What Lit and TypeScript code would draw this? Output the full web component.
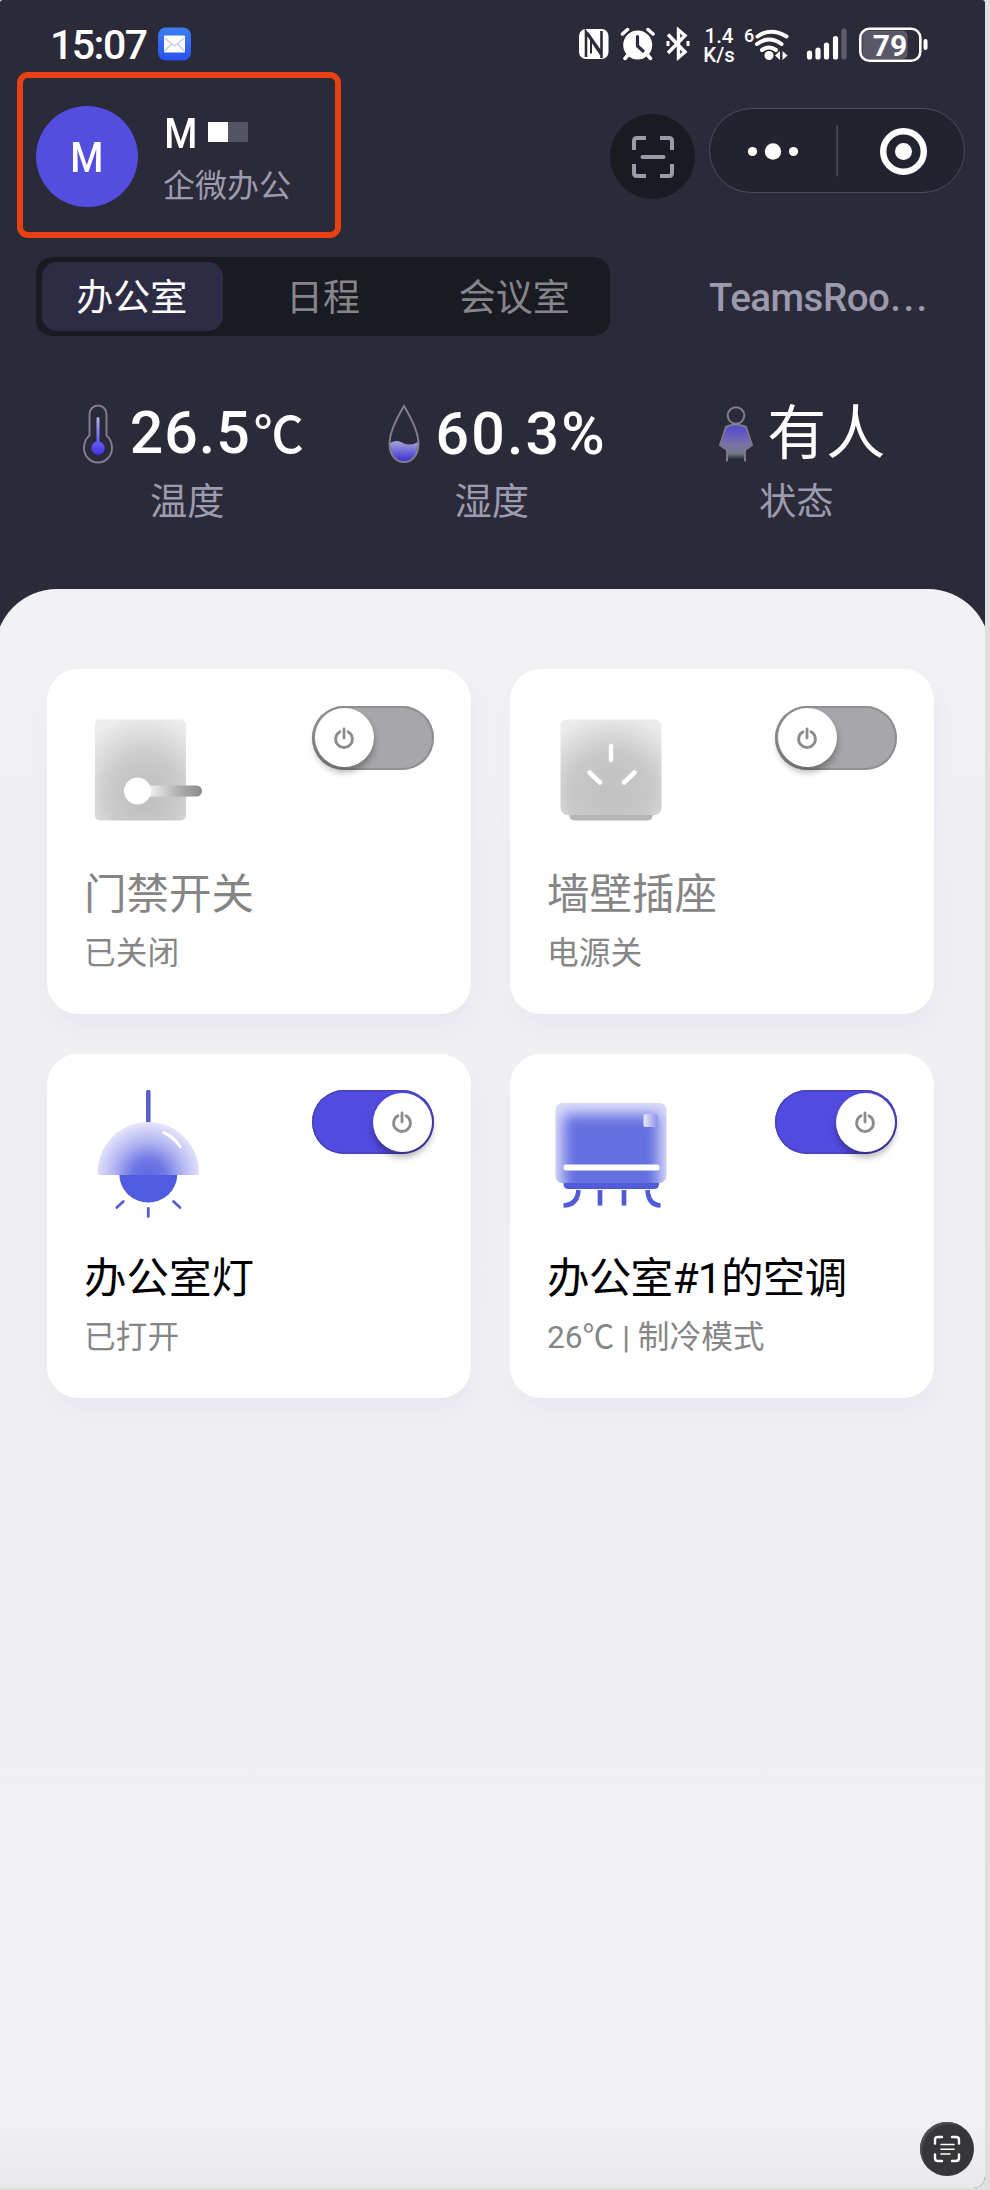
import { LitElement, html, css, svg, TemplateResult } from "lit";
import { customElement, property } from "lit/decorators.js";
import { classMap } from "lit/directives/class-map.js";

const doorIcon = svg`
  <defs>
    <radialGradient id="door" cx="0.55" cy="0.75" r="0.8">
      <stop offset="0" stop-color="#bdbdbd"/><stop offset="0.5" stop-color="#cbcbcb"/><stop offset="1" stop-color="#ececec"/>
    </radialGradient>
    <linearGradient id="handle" gradientUnits="userSpaceOnUse" x1="150" y1="0" x2="202" y2="0">
      <stop offset="0" stop-color="#f0f0f0"/><stop offset="0.5" stop-color="#b4b4b4"/><stop offset="1" stop-color="#8a8a8a"/>
    </linearGradient>
  </defs>
  <rect x="95" y="719" width="91" height="101" rx="5" fill="url(#door)"/>
  <path d="M150 785H196.500a5.500 5.500 0 0 1 0 11H150z" fill="url(#handle)"/>
  <circle cx="137.500" cy="790.500" r="13.500" fill="#fff"/>`;

const socketIcon = svg`
  <defs>
    <radialGradient id="sock" cx="0.5" cy="0.75" r="0.8">
      <stop offset="0" stop-color="#c1c1c1"/><stop offset="0.5" stop-color="#c8c8c8"/><stop offset="1" stop-color="#ebebeb"/>
    </radialGradient>
  </defs>
  <path d="M105.500 812h85q-1 8-6 8h-73q-5 0-6-8z" fill="#b5b5b5"/>
  <rect x="97.500" y="719" width="101" height="95.500" rx="7" fill="url(#sock)"/>
  <path d="M148 745.500v14M126.500 772l10.500 10M171.500 772l-10.500 10" stroke="#fff" stroke-width="4.500" stroke-linecap="round"/>`;

const lampIcon = svg`
  <defs>
    <radialGradient id="dome" gradientUnits="userSpaceOnUse" cx="148.300" cy="1176" r="54">
      <stop offset="0" stop-color="#5e68e2"/><stop offset="0.3" stop-color="#6f78e5"/><stop offset="0.65" stop-color="#b3b6f2"/><stop offset="1" stop-color="#e6e6fb"/>
    </radialGradient>
  </defs>
  <path d="M148.300 1092v32" stroke="#5560d0" stroke-width="4.500" stroke-linecap="round"/>
  <path d="M119.300 1174a29 28.500 0 0 0 58 0z" fill="#4f5cdf"/>
  <path d="M99 1175q-1.500-1-1.300-3a50.600 50 0 0 1 101.200 0q0.200 2-1.300 3z" fill="url(#dome)"/>
  <path d="M163.500 1132.500q11 4 17 14.500q-7-9-17-14.500z" stroke="#fff" stroke-width="2.500" stroke-linejoin="round" fill="#fff"/>
  <path d="M148.300 1208.500v8M123.300 1201.500l-6.500 6M173.500 1201.500l6.500 6" stroke="#5560d0" stroke-width="2.800" stroke-linecap="round"/>`;

const acIcon = svg`
  <defs>
    <filter id="soft" x="-0.2" y="-0.2" width="1.4" height="1.4"><feGaussianBlur stdDeviation="7"/></filter>
    <clipPath id="body"><rect x="92.500" y="1103" width="111" height="80" rx="7"/></clipPath>
    <linearGradient id="led"><stop offset="0" stop-color="#e9e9fc"/><stop offset="1" stop-color="#8c91ea"/></linearGradient>
  </defs>
  <path d="M100.500 1181h95.500v3q0 5-5 5h-85.500q-5 0-5-5z" fill="#4f5bd8"/>
  <g clip-path="url(#body)">
    <rect x="92" y="1102" width="112" height="82" fill="#dcdcfa"/>
    <rect x="100" y="1114" width="96" height="84" fill="#6570e0" filter="url(#soft)"/>
  </g>
  <rect x="100.500" y="1164.500" width="96" height="6" rx="2.500" fill="#fff"/>
  <rect x="180.500" y="1114" width="14" height="13" rx="2" fill="url(#led)"/>
  <path d="M115.500 1190q-1 15-15 15.500M137 1190v15.500M161 1190v15.500M184.500 1190q1 15 13 15.500" stroke="#4f5bd8" stroke-width="4.600" fill="none"/>`;

@customElement("power-switch")
export class PowerSwitch extends LitElement {
  @property({ type: Boolean }) on = false;
  static styles = css`
    :host { display: block; }
    .track {
      box-sizing: border-box; width: 122px; height: 64px; padding: 2.5px; border-radius: 32px;
      display: flex; background: #a7a7ab; border: 0; box-shadow: inset 0 0 0 2px #8f8f92;
    }
    .on { background: #524be2; justify-content: flex-end; box-shadow: inset 0 0 0 1.5px #4741b8; }
    .knob {
      width: 59px; height: 59px; border-radius: 50%; background: #fff;
      display: flex; align-items: center; justify-content: center;
      box-shadow: 0 5px 7px rgba(0, 0, 0, 0.32);
    }
  `;
  render() {
    return html`<div class=${classMap({ track: true, on: this.on })}>
      <div class="knob">
        <svg width="22" height="24" viewBox="0 0 22 24" fill="none" stroke="#8c8c8c" stroke-width="2.800" stroke-linecap="round">
          <path d="M7 5.700a8.400 8.400 0 1 0 8 0M11 3v9" />
        </svg>
      </div>
    </div>`;
  }
}

@customElement("device-card")
export class DeviceCard extends LitElement {
  @property({ attribute: false }) icon: TemplateResult | unknown;
  @property() name = "";
  @property() status = "";
  @property({ type: Number }) top = 0;
  @property({ type: Boolean }) on = false;
  static styles = css`
    :host {
      display: block; box-sizing: border-box; height: 344.5px; border-radius: 31px; background: #fff;
      padding: 36.5px 37px 0 37px; box-shadow: 3px 14px 20px rgba(90, 80, 230, 0.05);
      font-family: Roboto, "Noto Sans CJK SC", sans-serif;
    }
    .head { display: flex; justify-content: space-between; height: 159px; }
    .art { display: block; flex: none; }
    .name { font-size: 42.5px; line-height: 60px; white-space: nowrap; color: #858585; }
    .name.on { color: #000; }
    .name.long { letter-spacing: -0.7px; }
    .status { font-size: 31.7px; line-height: 44px; margin-top: 7px; white-space: nowrap; color: #868686; }
  `;
  render() {
    return html`
      <div class="head">
        <svg class="art" width="140" height="140" viewBox="84 ${this.top + 36.5} 140 140">${this.icon}</svg>
        <power-switch ?on=${this.on}></power-switch>
      </div>
      <div class=${classMap({ name: true, on: this.on, long: this.name.length > 6 })}>${this.name}</div>
      <div class="status">${this.status}</div>
    `;
  }
}

@customElement("app-root")
export class AppRoot extends LitElement {
  static styles = css`
    :host {
      display: block; width: 990px; height: 2190px; box-sizing: border-box; background: #dfdfe0;
      font-family: Roboto, "Noto Sans CJK SC", sans-serif;
    }
    .screen {
      width: 985px; height: 2188px; overflow: hidden; position: relative;
      background: #2b2a39; border-radius: 3px 3px 12px 0; display: flex; flex-direction: column;
    }
    svg { display: block; flex: none; }
    .header { height: 589px; flex: none; }
    .statusbar { height: 72px; box-sizing: border-box; padding: 27px 0 0 50px; display: flex; align-items: flex-start; color: #fff; }
    .time { width: 108px; font-size: 41px; line-height: 37px; font-weight: 500; letter-spacing: -1.5px; }
    .icons { display: flex; margin-left: auto; padding-right: 56.5px; }
    .alarm { margin-left: 11px; }
    .bt { margin-left: 11px; }
    .rate { width: 36px; margin-left: 11px; text-align: center; font-size: 20.5px; font-weight: 500; }
    .rate span { display: block; height: 18px; line-height: 18px; }
    .rate span + span { margin-top: 1px; }
    .wifi { margin-left: 6.5px; overflow: visible; }
    .signal { margin-left: 16px; }
    .battery { margin-left: 12px; }

    .top { display: flex; height: 166px; padding-left: 17px; }
    .profile {
      box-sizing: border-box; width: 324px; height: 166px; border: 6px solid #e64013; border-radius: 11px;
      display: flex; align-items: flex-start; padding: 28px 0 0 13px;
    }
    .avatar {
      width: 102px; height: 101px; border-radius: 50%; background: #534de0; color: #fff; flex: none;
      display: flex; align-items: center; justify-content: center; font-size: 43px; font-weight: 500;
    }
    .m { display: inline-block; transform: scaleX(0.88); transform-origin: center; }
    .who { margin-left: 24px; display: flex; flex-direction: column; }
    .nameline { display: flex; height: 55px; color: #fff; font-size: 43px; line-height: 55px; font-weight: 500; }
    .mask { margin: 16px 0 0 8px; width: 20px; height: 20px; background: #fff; }
    .mask2 { margin-top: 16px; width: 20px; height: 20px; background: #555463; }
    .org { font-size: 32px; line-height: 46px; margin: 2px 0 0 1px; color: #9c9baf; }
    .scan {
      width: 85px; height: 85px; margin: 42px 0 0 269px; border-radius: 50%; background: #1a1a22;
      display: flex; align-items: center; justify-content: center;
    }
    .capsule {
      box-sizing: border-box; width: 256px; height: 85px; margin: 36px 0 0 14px; border: 1.5px solid #4e4d5d;
      border-radius: 43px; background: #23222f; display: flex; align-items: center;
    }

    .nav { display: flex; margin: 19px 0 0 36px; height: 79px; }
    .tabs { width: 574px; display: grid; grid-template-columns: repeat(3, 1fr); background: #1a1a22; border-radius: 16px; }
    .tab {
      margin: 5px 4px 5px 6px; padding: 0 2px 3px 0; display: flex; align-items: center; justify-content: center;
      font-size: 37px; color: #86858a; border-radius: 15px;
    }
    .tab.active { background: #2e2b44; color: #fff; }
    .room { margin-left: 99px; font-size: 38.5px; line-height: 82px; font-weight: 500; letter-spacing: -0.5px; color: #9c9aae; white-space: nowrap; }
    .dots { letter-spacing: 2.4px; margin-left: 1px; }

    .sensors { display: grid; grid-template-columns: repeat(3, 304.5px); margin: 66px 0 0 35px; }
    .sensor { display: flex; flex-direction: column; align-items: center; }
    .reading { display: flex; align-items: center; height: 64px; margin-left: 11px; }
    .value { margin-left: 16px; font-size: 59px; line-height: 64px; font-weight: 500; color: #fff; white-space: nowrap; letter-spacing: 1px; }
    .percent { letter-spacing: 2.2px; }
    .cjk { font-weight: 400; margin-left: 13px; letter-spacing: 0; }
    .unit { font-size: 50px; margin-left: 3px; letter-spacing: 0; }
    .label { margin-top: 9px; font-size: 37.3px; line-height: 54px; color: #9c9baf; }

    .panel {
      flex: 1; margin: 0 -5px; padding: 80px 56px 0 52px; border-radius: 62px 62px 0 0;
      background: linear-gradient(#f2f1f4, #f0f0f2 300px, #f1f1f3 calc(100% - 65px), #e9e9eb);
    }
    .cards { display: grid; grid-template-columns: 424px 424px; column-gap: 39px; row-gap: 40px; }
    .fab {
      position: absolute; right: 11px; bottom: 12px; width: 54px; height: 54px; border-radius: 50%;
      background: #363638; box-shadow: inset 2px 2px 1px #505052; display: flex; align-items: center; justify-content: center;
    }
  `;

  private statusIcons() {
    return html`
      <svg width="30" height="34" viewBox="575 27 30 34">
        <rect x="575" y="29" width="29.500" height="30" rx="7" fill="#fff" />
        <path d="M582 57V32L597.500 55V58M597.500 56V31" fill="none" stroke="#2b2a39" stroke-width="2.600" />
        <path d="M587 38.500v15" fill="none" stroke="#2b2a39" stroke-width="2" />
        <path d="M583.500 33l13 18.500" stroke="#2b2a39" stroke-width="2.200" />
      </svg>
      <svg class="alarm" width="35" height="34" viewBox="616.500 27 35 34" fill="none" stroke="#fff" stroke-linecap="round">
        <circle cx="634.200" cy="45" r="14.500" fill="#fff" stroke="none" />
        <path d="M619 34l5-4.500M649.500 34l-5-4.500M624.500 55l-3 3.500M644 55l3 3.500" stroke-width="3.500" />
        <path d="M634 36.500v9.500l5.500 5" stroke="#2b2a39" stroke-width="3.200" />
      </svg>
      <svg class="bt" width="24" height="34" viewBox="662.500 27 24 34" fill="none" stroke="#fff" stroke-width="3.400">
        <path d="M664.500 34.500l17 17.500l-6.500 5.500V30l6.500 5.500L664.500 53" />
        <path d="M664.500 41v5M684.500 41v5" stroke-width="3" />
      </svg>
      <div class="rate"><span>1.4</span><span>K/s</span></div>
      <svg class="wifi" width="46" height="34" viewBox="743.500 27 46 34" fill="none" stroke="#fff" stroke-width="4" stroke-linecap="round">
        <text x="743.500" y="41.500" font-size="18" font-weight="500" fill="#fff" stroke="none">6</text>
        <path d="M757 36.500q13-9.500 29 0M756.500 44q12-9 24.500 0M761.500 50q7-5 14 0" />
        <circle cx="768.500" cy="55.500" r="4.500" fill="#fff" stroke="none" />
        <path d="M779.500 51v9l-5-4.500zM782 51v9l5-4.500z" fill="#fff" stroke="none" />
      </svg>
      <svg class="signal" width="41" height="34" viewBox="805.500 27 41 34" stroke="#fff" stroke-width="5.200" stroke-linecap="round">
        <path d="M809 53v4M817.500 50v7M826 45v12M835 38.500v18.500" />
        <path d="M843.500 31v26" stroke="#5e5d70" />
      </svg>
      <svg class="battery" width="70" height="36" viewBox="858.500 26.500 70 36">
        <rect x="862" y="30" width="45" height="28.500" rx="5" fill="#595868" />
        <rect x="859.800" y="28.200" width="60" height="32" rx="9" fill="none" stroke="#fff" stroke-width="2.600" />
        <rect x="923" y="38.500" width="4" height="11" rx="2" fill="#fff" />
        <text x="889.500" y="55" text-anchor="middle" font-size="30" font-weight="700" fill="#fff">79</text>
      </svg>
    `;
  }

  private thermo() {
    return html`<svg width="32" height="60" viewBox="0 0 32 60">
      <defs><linearGradient id="t" x1="0" y1="0" x2="0" y2="1"><stop offset="0" stop-color="#b9b5e8" /><stop offset="0.6" stop-color="#6a62f0" /><stop offset="1" stop-color="#3d33f0" /></linearGradient></defs>
      <path d="M7.500 10a8.500 8.500 0 0 1 17 0v21.500q5.500 4.500 5.500 12.500a14 14.500 0 0 1-28 0q0-8 5.500-12.500z" fill="none" stroke="#82808e" stroke-width="1.900" />
      <path d="M14.500 14.500a1.500 1.500 0 0 1 3 0v23a6.700 6.700 0 1 1-3 0z" fill="url(#t)" />
    </svg>`;
  }
  private drop() {
    return html`<svg width="32" height="60" viewBox="0 0 32 60">
      <defs><linearGradient id="w" x1="0" y1="0" x2="0" y2="1"><stop offset="0" stop-color="#a9a5dc" /><stop offset="1" stop-color="#3029cf" /></linearGradient></defs>
      <path d="M2 39q7-4 13 0q7 3.500 15-1q1 20-14 20.500Q1 58 2 39z" fill="url(#w)" />
      <path d="M16 2Q1.500 26 1.500 40c0 11 6.500 18 14.500 18s14.500-7 14.500-18Q30.500 26 16 2z" fill="none" stroke="#82808e" stroke-width="1.900" />
    </svg>`;
  }
  private person() {
    return html`<svg width="36" height="60" viewBox="0 0 36 60">
      <defs><linearGradient id="p" x1="0" y1="0" x2="0" y2="1"><stop offset="0" stop-color="#4d43d8" /><stop offset="0.6" stop-color="#7773aa" /><stop offset="0.85" stop-color="#77758a" /><stop offset="1" stop-color="#2b2a39" /></linearGradient></defs>
      <path d="M8 22q9-5 20 0l6 19-7 5v9H9v-9l-7-5z" fill="url(#p)" />
      <path d="M9 57.500V46l-7-5 6-18q9.500-4.500 20 0l6 18-7 5v11.500" fill="none" stroke="#7a7889" stroke-width="2" />
      <circle cx="18" cy="11.500" r="8.300" fill="none" stroke="#82808e" stroke-width="2" />
    </svg>`;
  }

  render() {
    return html`
      <div class="screen">
        <div class="header">
          <div class="statusbar">
            <div class="time">15:07</div>
            <svg width="33" height="34" viewBox="0 0 33 34">
              <defs><linearGradient id="mail" x1="0" y1="0" x2="0" y2="1"><stop offset="0" stop-color="#3b80f4" /><stop offset="1" stop-color="#2a50ef" /></linearGradient></defs>
              <rect width="33" height="33" y="0.500" rx="8" fill="url(#mail)" />
              <rect x="6" y="8.500" width="21" height="17" rx="1" fill="#fff" />
              <path d="M6.500 11l10 8 10-8M6.500 24l7-7M26.500 24l-7-7" fill="none" stroke="#c3cbe6" stroke-width="1.300" />
            </svg>
            <div class="icons">${this.statusIcons()}</div>
          </div>
          <div class="top">
            <div class="profile">
              <div class="avatar"><span class="m">M</span></div>
              <div class="who">
                <div class="nameline"><span class="m">M</span><i class="mask"></i><i class="mask2"></i></div>
                <div class="org">企微办公</div>
              </div>
            </div>
            <div class="scan">
              <svg width="42" height="42" viewBox="0 0 42 42" fill="none" stroke="#9b9aa8" stroke-width="4">
                <path d="M2 14V5q0-3 3-3h9M28 2h9q3 0 3 3v9M40 28v9q0 3-3 3h-9M14 40H5q-3 0-3-3v-9" />
                <path d="M10.500 21h21" stroke-linecap="round" />
              </svg>
            </div>
            <div class="capsule">
              <svg width="253" height="82" viewBox="710 109.500 253 82" fill="#fff">
                <circle cx="752.500" cy="151" r="4.600" /><circle cx="773" cy="151" r="8.200" /><circle cx="793.500" cy="151" r="4.600" />
                <rect x="836.500" y="125" width="1.500" height="51" fill="#4e4d5d" />
                <circle cx="903.500" cy="151" r="20.300" fill="none" stroke="#fff" stroke-width="6.400" />
                <circle cx="903.500" cy="151" r="8.500" />
              </svg>
            </div>
          </div>
          <div class="nav">
            <div class="tabs">
              <div class="tab active">办公室</div>
              <div class="tab">日程</div>
              <div class="tab">会议室</div>
            </div>
            <div class="room">TeamsRoo<span class="dots">...</span></div>
          </div>
          <div class="sensors">
            <div class="sensor">
              <div class="reading">${this.thermo()}<div class="value">26.5<span class="unit">℃</span></div></div>
              <div class="label">温度</div>
            </div>
            <div class="sensor">
              <div class="reading">${this.drop()}<div class="value percent">60.3%</div></div>
              <div class="label">湿度</div>
            </div>
            <div class="sensor">
              <div class="reading">${this.person()}<div class="value cjk">有人</div></div>
              <div class="label">状态</div>
            </div>
          </div>
        </div>
        <div class="panel">
          <div class="cards">
            <device-card .icon=${doorIcon} .top=${669} name="门禁开关" status="已关闭"></device-card>
            <device-card .icon=${socketIcon} .top=${669} name="墙壁插座" status="电源关"></device-card>
            <device-card .icon=${lampIcon} .top=${1053.5} name="办公室灯" status="已打开" on></device-card>
            <device-card .icon=${acIcon} .top=${1053.5} name="办公室#1的空调" status="26℃ | 制冷模式" on></device-card>
          </div>
        </div>
        <div class="fab">
          <svg width="28" height="28" viewBox="0 0 28 28" fill="none" stroke="#fff" stroke-width="2.400" stroke-linecap="round">
            <path d="M2 8.500V5q0-3 3-3h4M19 2h4q3 0 3 3v3.500M26 19.500V23q0 3-3 3h-4M9 26H5q-3 0-3-3v-3.500" />
            <path d="M8 9.500h13M8 14.200h13M8 19h9" stroke-width="1.600" />
          </svg>
        </div>
      </div>
    `;
  }
}
